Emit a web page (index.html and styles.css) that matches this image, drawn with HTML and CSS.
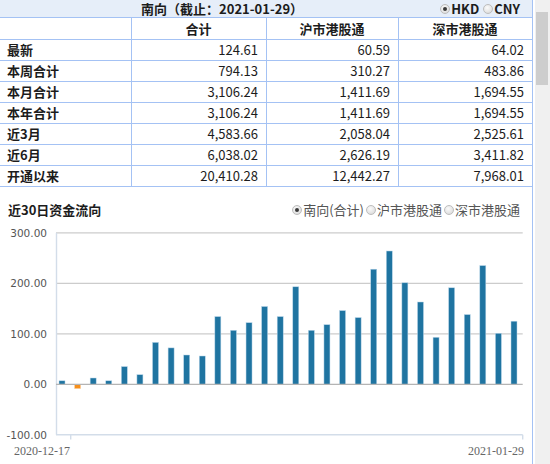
FILE: index.html
```html
<!DOCTYPE html>
<html lang="zh-CN">
<head>
<meta charset="utf-8">
<title>南向资金</title>
<link rel="stylesheet" href="styles.css">
</head>
<body>
<div class="page">
  <div class="main">
    <div class="titlebar">
      <div class="title">南向（截止：2021-01-29）</div>
      <div class="title-radios">
        <span class="opt"><span class="radio on"></span>HKD</span>
        <span class="opt"><span class="radio"></span>CNY</span>
      </div>
    </div>
    <table class="grid">
      <colgroup><col class="c1"><col class="c2"><col class="c3"><col class="c4"></colgroup>
      <thead>
        <tr><td></td><td>合计</td><td>沪市港股通</td><td>深市港股通</td></tr>
      </thead>
      <tbody>
        <tr><td class="label">最新</td><td class="num">124.61</td><td class="num">60.59</td><td class="num">64.02</td></tr>
        <tr><td class="label">本周合计</td><td class="num">794.13</td><td class="num">310.27</td><td class="num">483.86</td></tr>
        <tr><td class="label">本月合计</td><td class="num">3,106.24</td><td class="num">1,411.69</td><td class="num">1,694.55</td></tr>
        <tr><td class="label">本年合计</td><td class="num">3,106.24</td><td class="num">1,411.69</td><td class="num">1,694.55</td></tr>
        <tr><td class="label">近3月</td><td class="num">4,583.66</td><td class="num">2,058.04</td><td class="num">2,525.61</td></tr>
        <tr><td class="label">近6月</td><td class="num">6,038.02</td><td class="num">2,626.19</td><td class="num">3,411.82</td></tr>
        <tr><td class="label">开通以来</td><td class="num">20,410.28</td><td class="num">12,442.27</td><td class="num">7,968.01</td></tr>
      </tbody>
    </table>
    <div class="chart-head">
      <div class="chart-title">近30日资金流向</div>
      <div class="chart-radios">
        <span class="opt"><span class="radio on"></span>南向(合计)</span>
        <span class="opt"><span class="radio"></span>沪市港股通</span>
        <span class="opt"><span class="radio"></span>深市港股通</span>
      </div>
    </div>
    <svg class="chart" width="532" height="240" viewBox="0 0 532 240">
      <g class="grid-lines">
        <line x1="56" y1="8.8" x2="522.7" y2="8.8"/>
        <line x1="56" y1="59.3" x2="522.7" y2="59.3"/>
        <line x1="56" y1="109.8" x2="522.7" y2="109.8"/>
      </g>
      <g class="axis">
        <line x1="56.5" y1="8.8" x2="56.5" y2="210.8"/>
        <line x1="56" y1="210.8" x2="522.7" y2="210.8"/>
        <line x1="70.7" y1="210.8" x2="70.7" y2="215.5"/>
        <line x1="522.7" y1="210.8" x2="522.7" y2="215.5"/>
      </g>
      <g class="ylabels">
        <text x="47" y="12.6">300.00</text>
        <text x="47" y="63.1">200.00</text>
        <text x="47" y="113.6">100.00</text>
        <text x="47" y="164.1">0.00</text>
        <text x="47" y="214.6">-100.00</text>
      </g>
      <g class="bars">
        <rect x="59.0" y="156.8" width="6" height="3.5"/>
        <rect class="neg" x="74.59" y="160.3" width="6" height="4.3"/>
        <rect x="90.17" y="154.0" width="6" height="6.3"/>
        <rect x="105.76" y="156.8" width="6" height="3.5"/>
        <rect x="121.34" y="142.6" width="6" height="17.7"/>
        <rect x="136.93" y="150.7" width="6" height="9.6"/>
        <rect x="152.52" y="118.4" width="6" height="41.9"/>
        <rect x="168.10" y="123.9" width="6" height="36.4"/>
        <rect x="183.69" y="131.0" width="6" height="29.3"/>
        <rect x="199.27" y="132.0" width="6" height="28.3"/>
        <rect x="214.86" y="92.6" width="6" height="67.7"/>
        <rect x="230.45" y="106.3" width="6" height="54.0"/>
        <rect x="246.03" y="98.7" width="6" height="61.6"/>
        <rect x="261.62" y="82.5" width="6" height="77.8"/>
        <rect x="277.20" y="92.6" width="6" height="67.7"/>
        <rect x="292.79" y="62.8" width="6" height="97.5"/>
        <rect x="308.38" y="106.3" width="6" height="54.0"/>
        <rect x="323.96" y="100.7" width="6" height="59.6"/>
        <rect x="339.55" y="86.6" width="6" height="73.7"/>
        <rect x="355.13" y="93.6" width="6" height="66.7"/>
        <rect x="370.72" y="45.2" width="6" height="115.1"/>
        <rect x="386.31" y="27.0" width="6" height="133.3"/>
        <rect x="401.89" y="58.8" width="6" height="101.5"/>
        <rect x="417.48" y="78.0" width="6" height="82.3"/>
        <rect x="433.06" y="113.3" width="6" height="47.0"/>
        <rect x="448.65" y="63.8" width="6" height="96.5"/>
        <rect x="464.24" y="90.6" width="6" height="69.7"/>
        <rect x="479.82" y="41.6" width="6" height="118.7"/>
        <rect x="495.41" y="109.3" width="6" height="51.0"/>
        <rect x="511.0" y="97.2" width="6" height="63.1"/>
      </g>
      <line class="zero" x1="56" y1="160.3" x2="522.7" y2="160.3"/>
      <g class="xlabels">
        <text x="14" y="231">2020-12-17</text>
        <text class="end" x="524" y="231">2021-01-29</text>
      </g>
    </svg>
  </div>
  <div class="scrollbar"><div class="thumb"></div></div>
</div>
</body>
</html>
```

FILE: styles.css
```css
html, body {
  margin: 0;
  padding: 0;
  background: #ffffff;
}

body {
  font-family: "Noto Sans CJK SC", "Noto Sans", sans-serif;
  font-size: 13px;
  color: #1c1c1c;
}

.page {
  display: flex;
  width: 550px;
  height: 464px;
  overflow: hidden;
}

.main {
  width: 532px;
  border-right: 1px solid #a4c2f4;
  flex: none;
}

.titlebar {
  display: flex;
  align-items: center;
  height: 17px;
  line-height: 17px;
  background: #e6eef9;
  border-bottom: 1px solid #a4c2f4;
}

.title {
  flex: 1;
  text-align: center;
  font-weight: bold;
  padding-left: 4px;
}

.title-radios {
  display: flex;
  align-items: center;
  gap: 4px;
  padding-right: 12px;
  font-weight: bold;
}

.opt {
  display: inline-flex;
  align-items: center;
  gap: 1px;
  white-space: nowrap;
}

.radio {
  display: inline-block;
  position: relative;
  width: 10px;
  height: 10px;
  box-sizing: border-box;
  border-radius: 50%;
  border: 1px solid #bdbdbd;
  background: radial-gradient(circle at 40% 35%, #fbfbfb 0%, #e4e4e4 60%, #d2d2d2 100%);
}

.radio.on::after {
  content: "";
  position: absolute;
  left: 2px;
  top: 2px;
  width: 4px;
  height: 4px;
  border-radius: 50%;
  background: #3a3a3a;
}

.grid {
  width: 532px;
  border-collapse: separate;
  border-spacing: 0;
  table-layout: fixed;
}

.c1 { width: 132px; }
.c2 { width: 135px; }
.c3 { width: 132px; }
.c4 { width: 133px; }

.grid tr {
  height: 21px;
}

.grid thead tr {
  height: 22px;
}

.grid td {
  border-right: 1px solid #a4c2f4;
  border-bottom: 1px solid #a4c2f4;
  padding: 0 8px 0 7px;
  line-height: 20px;
  white-space: nowrap;
  vertical-align: middle;
}

.grid td:last-child {
  border-right: none;
}

.grid thead td {
  text-align: center;
  font-weight: bold;
}

.grid td.label {
  font-weight: bold;
  text-align: left;
}

.grid td.num {
  text-align: right;
}

.chart-head {
  display: flex;
  align-items: center;
  justify-content: space-between;
  height: 37px;
  box-sizing: border-box;
  padding: 14px 12px 5px 8px;
  line-height: 18px;
}

.chart-title {
  font-weight: bold;
}

.chart-radios {
  display: flex;
  align-items: center;
  gap: 2px;
  color: #555555;
}

.chart {
  display: block;
}

.grid-lines line {
  stroke: #cccccc;
  stroke-width: 1.2;
}

.axis line {
  stroke: #d3dde9;
  stroke-width: 1.4;
}

.zero {
  stroke: #b4b4b4;
  stroke-width: 1.3;
}

.ylabels text {
  font-family: "DejaVu Sans", sans-serif;
  font-size: 10.5px;
  fill: #555555;
  text-anchor: end;
}

.xlabels text {
  font-family: "Liberation Serif", serif;
  font-size: 12px;
  fill: #666666;
}

.xlabels text.end {
  text-anchor: end;
}

.bars rect {
  fill: #1f74a1;
  stroke: #b9d6ea;
  stroke-width: 0.5;
}

.bars rect.neg {
  fill: #f6901c;
  stroke: #fbd2a6;
}

.scrollbar {
  flex: none;
  width: 15px;
  height: 464px;
  margin-left: 2px;
  background: #f0f0f0;
  padding-top: 12px;
  box-sizing: border-box;
}

.thumb {
  margin: 0 2px 0 1px;
  height: 73px;
  background: #cdcdcd;
}
```
